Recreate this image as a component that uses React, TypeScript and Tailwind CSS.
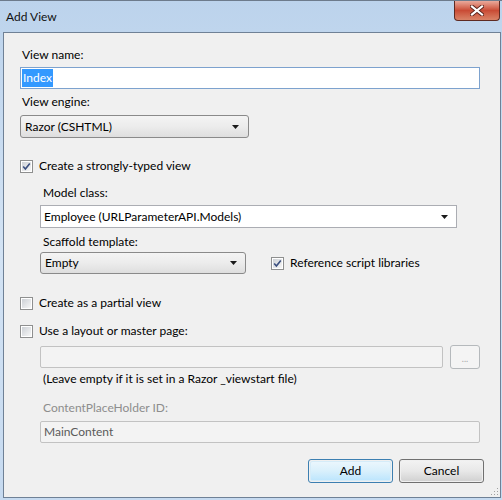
import React from 'react';

const CheckBox: React.FC<{ checked?: boolean }> = ({ checked }) => (
  <span className="relative w-[13px] h-[13px] shrink-0 border border-[#8e8f8f] bg-white p-[1px] flex">
    <span className="flex-1 bg-gradient-to-br from-[#cdd1d6] to-[#f7f7f7]" />
    {checked && (
      <svg className="absolute left-0 top-0" width="11" height="11" viewBox="0 0 11 11">
        <path d="M2.2 5.4 L4.4 8 L8.8 2.4" fill="none" stroke="#3b4f7f" strokeWidth="1.6" />
      </svg>
    )}
  </span>
);

const Arrow: React.FC = () => (
  <svg width="7" height="4" viewBox="0 0 7 4" className="shrink-0">
    <polygon points="0,0 7,0 3.5,4" fill="#1a1a1a" />
  </svg>
);

const Label: React.FC<{ children: React.ReactNode; className?: string }> = ({ children, className = '' }) => (
  <div className={`h-[16px] leading-[16px] ${className}`}>{children}</div>
);

export default function App() {
  return (
    <div className="w-[502px] h-[500px] flex flex-col bg-gradient-to-b from-[#bcd3ec] via-[#d3e3f4] to-[#c6daf0] font-['Lato',sans-serif] text-[12px] text-black overflow-hidden">
      {/* title bar */}
      <div className="h-[32px] shrink-0 flex items-start justify-between border-t border-[#6d7b8c]">
        <div className="pl-[6px] pt-[8px] text-[12px] leading-[16px] text-[#111]">Add View</div>
        <div className="mr-[2px] w-[46px] h-[20px] rounded-b-[4px] border border-t-0 border-[#5e2a22] bg-gradient-to-b from-[#e9a99b] via-[#c94b35] to-[#d98367] flex items-center justify-center">
          <svg width="14" height="11" viewBox="0 0 14 11">
            <path d="M2 1.5 L12 9.5 M12 1.5 L2 9.5" stroke="#5a231b" strokeWidth="4" strokeLinecap="square" />
            <path d="M2 1.5 L12 9.5 M12 1.5 L2 9.5" stroke="#ffffff" strokeWidth="2.2" strokeLinecap="square" />
          </svg>
        </div>
      </div>

      {/* client area */}
      <div className="relative ml-[3px] mr-[1px] mb-[2px] flex-1 border border-[#6f8196] bg-[#f0f0f0] pl-[16px] pr-[16px] pt-[14px] flex flex-col">
        <Label className="ml-[2px]">View name:</Label>
        <div className="mt-[4px] mr-[4px] h-[22px] border border-[#7da2ce] bg-white flex items-center px-[1px]">
          <span className="bg-[#3399ff] text-white h-[18px] leading-[18px] px-[1px]">Index</span>
        </div>

        <Label className="mt-[5px] ml-[2px]">View engine:</Label>
        <div className="mt-[5px] w-[229px] h-[23px] rounded-[3px] border border-[#8a8a8a] bg-gradient-to-b from-[#f4f4f4] via-[#ececec] to-[#dedede] flex items-center justify-between pl-[4px] pr-[9px]">
          <span>Razor (CSHTML)</span>
          <Arrow />
        </div>

        <div className="mt-[20px] h-[16px] flex items-center gap-[6px]">
          <CheckBox checked />
          <span>Create a strongly-typed view</span>
        </div>

        <div className="pl-[20px] flex flex-col">
          <Label className="mt-[11px] ml-[3px]">Model class:</Label>
          <div className="mt-[4px] mr-[27px] h-[23px] border border-[#abadb3] bg-white flex items-center justify-between pl-[3px] pr-[8px]">
            <span>Employee (URLParameterAPI.Models)</span>
            <Arrow />
          </div>

          <Label className="mt-[6px] ml-[3px]">Scaffold template:</Label>
          <div className="mt-[2px] h-[22px] flex items-center">
            <div className="w-[206px] h-[22px] rounded-[3px] border border-[#8a8a8a] bg-gradient-to-b from-[#f4f4f4] via-[#ececec] to-[#dedede] flex items-center justify-between pl-[4px] pr-[8px]">
              <span>Empty</span>
              <Arrow />
            </div>
            <div className="ml-[25px] flex items-center gap-[6px]">
              <CheckBox checked />
              <span>Reference script libraries</span>
            </div>
          </div>
        </div>

        <div className="mt-[21px] h-[16px] flex items-center gap-[6px]">
          <CheckBox />
          <span>Create as a partial view</span>
        </div>
        <div className="mt-[12px] h-[16px] flex items-center gap-[6px]">
          <CheckBox />
          <span>Use a layout or master page:</span>
        </div>

        <div className="pl-[20px] flex flex-col">
          <div className="mt-[6px] mr-[4px] h-[24px] flex items-center gap-[7px]">
            <div className="flex-1 h-[22px] rounded-[2px] border border-[#c2c2c2] bg-[#f3f3f3]" />
            <div className="w-[30px] h-[24px] rounded-[3px] border border-[#b5b9bc] bg-[#f4f4f4] flex items-center justify-center text-[9px] text-[#a8a8a8] leading-none pt-[3px]">...</div>
          </div>
          <Label className="mt-[2px] ml-[3px]">(Leave empty if it is set in a Razor _viewstart file)</Label>

          <Label className="mt-[13px] ml-[3px] text-[#8d8d8d]">ContentPlaceHolder ID:</Label>
          <div className="mt-[5px] mr-[4px] h-[22px] rounded-[2px] border border-[#c2c2c2] bg-[#f3f3f3] flex items-center pl-[3px] text-[#5a5a5a]">
            MainContent
          </div>
        </div>

        <div className="mt-[16px] flex justify-end gap-[6px]">
          <div className="w-[85px] h-[24px] rounded-[3px] border border-[#3c7fb1] p-[1px] flex">
            <div className="flex-1 rounded-[2px] border border-[#d5ecf9] bg-gradient-to-b from-[#eaf6fd] via-[#d9f0fc] to-[#bee6fd] flex items-center justify-center">Add</div>
          </div>
          <div className="w-[85px] h-[24px] rounded-[3px] border border-[#707070] p-[1px] flex">
            <div className="flex-1 rounded-[2px] bg-gradient-to-b from-[#f2f2f2] via-[#e8e8e8] to-[#d2d2d2] flex items-center justify-center">Cancel</div>
          </div>
        </div>

        {/* resize grip */}
        <svg className="absolute right-[1px] bottom-[1px]" width="10" height="10" viewBox="0 0 10 10">
          <rect x="8" y="2" width="1" height="1" fill="#a0a0a0" />
          <rect x="5" y="5" width="1" height="1" fill="#a0a0a0" />
          <rect x="8" y="5" width="1" height="1" fill="#a0a0a0" />
          <rect x="2" y="8" width="1" height="1" fill="#a0a0a0" />
          <rect x="5" y="8" width="1" height="1" fill="#a0a0a0" />
          <rect x="8" y="8" width="1" height="1" fill="#a0a0a0" />
        </svg>
      </div>
    </div>
  );
}
